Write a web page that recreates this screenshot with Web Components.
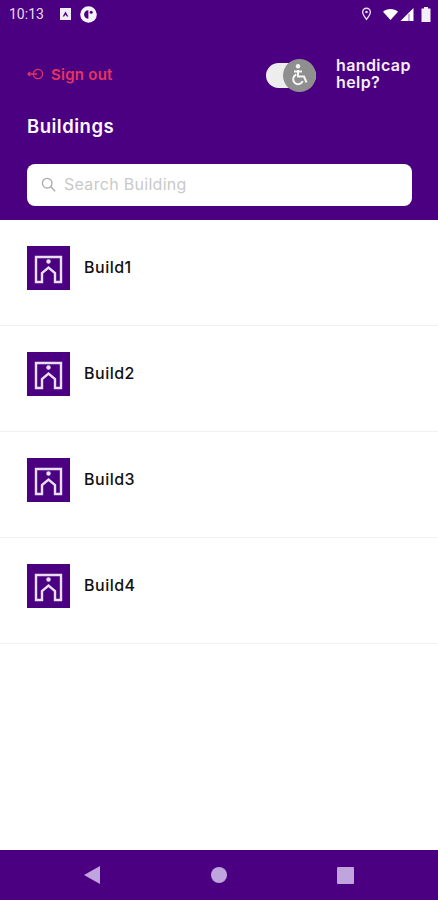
<!DOCTYPE html>
<html lang="en">
<head>
<meta charset="utf-8">
<title>Buildings</title>
<style>
    html, body { margin: 0; height: 100%; background: #fff; }
    body { display: flex; flex-direction: column; height: 900px; font-family: "Inter", "Liberation Sans", sans-serif; overflow: hidden; }
    building-list { flex: 1; }
</style>
</head>
<body>
<app-header></app-header>
<building-list>
    <building-row>Build1</building-row>
    <building-row>Build2</building-row>
    <building-row>Build3</building-row>
    <building-row>Build4</building-row>
</building-list>
<nav-bar></nav-bar>

<script>
class StatusBar extends HTMLElement {
    constructor() {
        super();
        this.attachShadow({ mode: 'open' });
        this.shadowRoot.innerHTML = `
            <style>
                :host {
                    display: flex;
                    align-items: center;
                    height: 28px;
                    padding: 0 7px 0 9px;
                    color: #e6dcf0;
                    font: 400 14px "Roboto", "Liberation Sans", sans-serif;
                }
                .time { margin-right: 16px; }
                .spacer { flex: 1; }
                svg { display: block; }
            </style>
            <span class="time">10:13</span>
            <svg width="11" height="12" viewBox="0 0 11 12" style="margin-right:9px">
                <path fill="#f1ecf6" d="M0 0h11v12H0z"/>
                <path fill="#4b0082" d="M5.500 3.500l2.800 5H6.900L5.500 6.500 4.100 8.500H2.700z"/>
            </svg>
            <svg width="17" height="17" viewBox="0 0 17 17">
                <circle cx="8.500" cy="8.500" r="8.300" fill="#f6f2fa"/>
                <path fill="#4b0082" d="M8.400 4.200v8.600a4.300 4.300 0 0 1 0-8.600z"/>
                <circle cx="11.200" cy="6.300" r="1.500" fill="#4b0082"/>
            </svg>
            <span class="spacer"></span>
            <svg width="11" height="14" viewBox="0 0 12 15" style="margin-right:11px">
                <path fill="none" stroke="#e6dcf0" stroke-width="1.500" d="M6 1.200a4.200 4.200 0 0 1 4.200 4.200C10.200 8.300 6 13.300 6 13.300S1.800 8.300 1.800 5.400A4.200 4.200 0 0 1 6 1.200z"/>
                <circle cx="6" cy="5.400" r="1.400" fill="#e6dcf0"/>
            </svg>
            <svg width="15" height="11" viewBox="0 0 18 13" style="margin-right:2px">
                <path fill="#fff" d="M0 3.300C2.400 1.200 5.500 0 9 0s6.600 1.200 9 3.300L9 13z"/>
            </svg>
            <svg width="14" height="13" viewBox="0 0 13 13" style="margin-right:7px">
                <path fill="#fff" d="M13 0v13H0z"/>
                <path fill="#4b0082" d="M9 5.500v7.500H8V6.500z" opacity=".6"/>
            </svg>
            <svg width="10" height="15" viewBox="0 0 10 15">
                <path fill="#f3eef8" d="M3 0h4v1.500h2.500V15H.5V1.500H3z"/>
            </svg>
        `;
    }
}

class SignOut extends HTMLElement {
    constructor() {
        super();
        this.attachShadow({ mode: 'open' });
        this.shadowRoot.innerHTML = `
            <style>
                :host {
                    display: inline-flex;
                    align-items: center;
                    gap: 6px;
                    color: #e6355f;
                    font-size: 15px;
                    font-weight: 600;
                    letter-spacing: .25px;
                }
                svg { display: block; }
            </style>
            <svg width="18" height="14" viewBox="0 0 18 14" fill="none" stroke="#e6355f" stroke-width="1.300">
                <circle cx="11" cy="7" r="4.600"/>
                <path d="M1 7h9M3.200 5L1 7l2.200 2"/>
            </svg>
            <span><slot></slot></span>
        `;
    }
}

class HandicapToggle extends HTMLElement {
    constructor() {
        super();
        this.attachShadow({ mode: 'open' });
        this.shadowRoot.innerHTML = `
            <style>
                :host {
                    display: inline-flex;
                    align-items: center;
                    gap: 20px;
                    color: #f4eef9;
                    font-size: 16px;
                    font-weight: 600;
                    line-height: 17px;
                    letter-spacing: .4px;
                }
                .switch {
                    position: relative;
                    width: 50px;
                    height: 25px;
                    margin-top: 2px;
                    border-radius: 13px;
                    background: #ededed;
                }
                .thumb {
                    position: absolute;
                    right: 0;
                    top: -4px;
                    width: 33px;
                    height: 33px;
                    border-radius: 50%;
                    background: #8f8f8f;
                    display: flex;
                    align-items: center;
                    justify-content: center;
                }
                .label { width: 76px; }
                svg { display: block; }
            </style>
            <div class="switch">
                <div class="thumb">
                    <svg width="18" height="22" viewBox="0 0 18 22" fill="none" stroke="#f5f5f5" stroke-width="2">
                        <circle cx="7" cy="2.200" r="2.200" fill="#f5f5f5" stroke="none"/>
                        <path d="M7 6v6.500h6l2.500 6"/>
                        <path d="M3 7.500h8"/>
                        <path d="M5.300 10.500a5 5 0 1 0 6.500 6.500"/>
                    </svg>
                </div>
            </div>
            <span class="label"><slot></slot></span>
        `;
    }
}

class SearchBox extends HTMLElement {
    constructor() {
        super();
        this.attachShadow({ mode: 'open' });
        this.shadowRoot.innerHTML = `
            <style>
                :host {
                    display: flex;
                    align-items: center;
                    gap: 8px;
                    height: 42px;
                    box-sizing: border-box;
                    padding: 0 14px 2px;
                    background: #fff;
                    border-radius: 8px;
                    color: #c9c9c9;
                    font-size: 16px;
                    letter-spacing: .3px;
                }
                svg { display: block; }
            </style>
            <svg width="15" height="15" viewBox="0 0 15 15" fill="none" stroke="#a9a9a9" stroke-width="1.300">
                <circle cx="6.200" cy="6.200" r="4.800"/>
                <path d="M9.800 9.800l4.400 4.400"/>
            </svg>
            <span><slot></slot></span>
        `;
    }
}

class AppHeader extends HTMLElement {
    constructor() {
        super();
        this.attachShadow({ mode: 'open' });
        this.shadowRoot.innerHTML = `
            <style>
                :host {
                    display: block;
                    height: 220px;
                    box-sizing: border-box;
                    background: #4b0082;
                }
                .content {
                    display: flex;
                    flex-direction: column;
                    padding: 0 26px 0 27px;
                }
                .top {
                    display: flex;
                    align-items: center;
                    justify-content: space-between;
                    height: 40px;
                    margin-top: 26px;
                }
                h1 {
                    margin: 20px 0 0;
                    height: 24px;
                    line-height: 24px;
                    color: #fbf8fd;
                    font-size: 18.500px;
                    font-weight: 600;
                    letter-spacing: .5px;
                }
                search-box { margin-top: 26px; }
            </style>
            <status-bar></status-bar>
            <div class="content">
                <div class="top">
                    <sign-out>Sign out</sign-out>
                    <handicap-toggle>handicap help?</handicap-toggle>
                </div>
                <h1>Buildings</h1>
                <search-box>Search Building</search-box>
            </div>
        `;
    }
}

class BuildingList extends HTMLElement {
    constructor() {
        super();
        this.attachShadow({ mode: 'open' });
        this.shadowRoot.innerHTML = `
            <style>
                :host { display: block; background: #fff; }
            </style>
            <slot></slot>
        `;
    }
}

class BuildingRow extends HTMLElement {
    constructor() {
        super();
        this.attachShadow({ mode: 'open' });
        this.shadowRoot.innerHTML = `
            <style>
                :host {
                    display: flex;
                    align-items: flex-start;
                    gap: 14px;
                    height: 106px;
                    box-sizing: border-box;
                    padding: 26px 27px 0;
                    border-bottom: 1px solid #f1f1f1;
                    color: #111;
                    font-size: 16px;
                    font-weight: 500;
                    letter-spacing: .5px;
                }
                .name { line-height: 42px; }
                svg { display: block; }
            </style>
            <svg width="43" height="44" viewBox="0 0 43 44">
                <rect width="43" height="44" fill="#4b0082"/>
                <path fill="none" stroke="#e8dff1" stroke-width="2.400" d="M9 36V11h25v25h-6v-9l-6.500-5.500L15 27v9z"/>
                <circle cx="21.500" cy="15.500" r="2.200" fill="#e8dff1"/>
            </svg>
            <span class="name"><slot></slot></span>
        `;
    }
}

class NavBar extends HTMLElement {
    constructor() {
        super();
        this.attachShadow({ mode: 'open' });
        this.shadowRoot.innerHTML = `
            <style>
                :host {
                    display: flex;
                    align-items: center;
                    justify-content: space-between;
                    height: 50px;
                    padding: 0 84px;
                    box-sizing: border-box;
                    background: #4b0082;
                }
                svg { display: block; }
            </style>
            <svg width="16" height="18" viewBox="0 0 16 18"><path fill="#c0a4de" d="M16 0v18L0 9z"/></svg>
            <svg width="16" height="16" viewBox="0 0 16 16"><circle cx="8" cy="8" r="8" fill="#c0a4de"/></svg>
            <svg width="17" height="17" viewBox="0 0 17 17"><rect width="17" height="17" rx="1" fill="#c0a4de"/></svg>
        `;
    }
}

customElements.define('status-bar', StatusBar);
customElements.define('sign-out', SignOut);
customElements.define('handicap-toggle', HandicapToggle);
customElements.define('search-box', SearchBox);
customElements.define('app-header', AppHeader);
customElements.define('building-list', BuildingList);
customElements.define('building-row', BuildingRow);
customElements.define('nav-bar', NavBar);
</script>
</body>
</html>
